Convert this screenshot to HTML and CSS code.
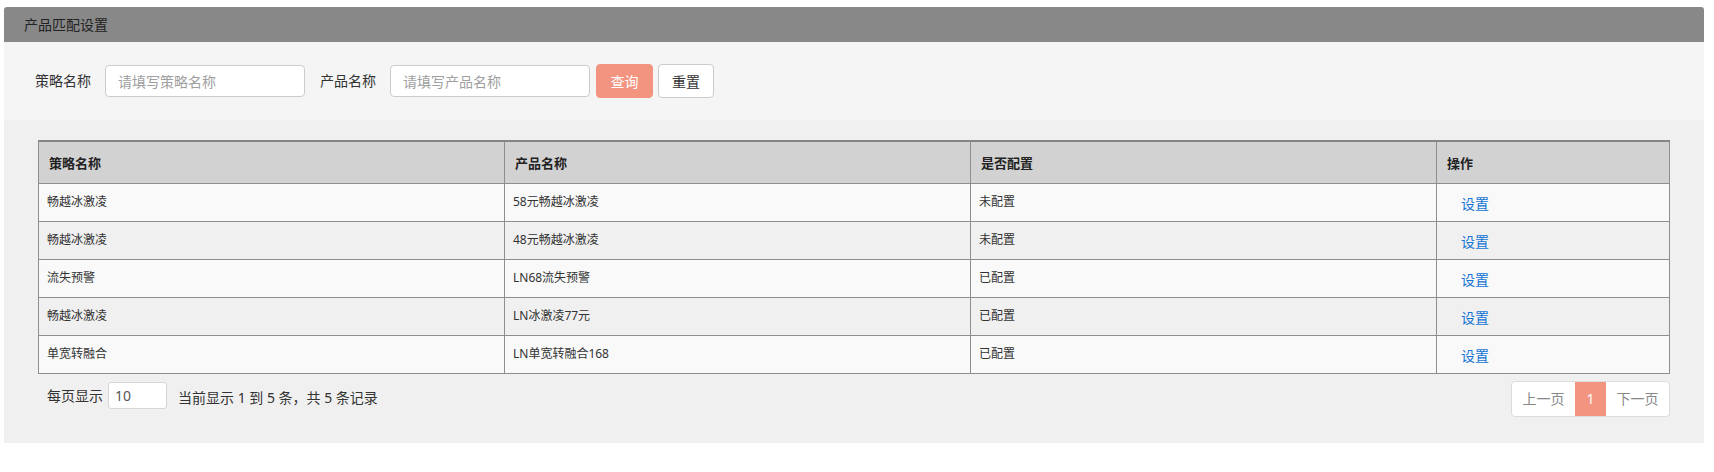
FILE: index.html
```html
<!DOCTYPE html>
<html lang="zh-CN">
<head>
<meta charset="utf-8">
<title>产品匹配设置</title>
<link rel="stylesheet" href="styles.css">
</head>
<body>
<div class="page">
  <div class="panel">
    <div class="panel-head">产品匹配设置</div>
    <div class="search">
      <label class="search-label">策略名称</label>
      <input class="search-input" type="text" placeholder="请填写策略名称">
      <label class="search-label">产品名称</label>
      <input class="search-input" type="text" placeholder="请填写产品名称">
      <button class="btn btn-primary" type="button">查询</button>
      <button class="btn btn-default" type="button">重置</button>
    </div>
    <div class="main">
      <table class="grid">
        <colgroup>
          <col class="col-wide"><col class="col-wide"><col class="col-wide"><col class="col-narrow">
        </colgroup>
        <thead>
          <tr><th>策略名称</th><th>产品名称</th><th>是否配置</th><th>操作</th></tr>
        </thead>
        <tbody>
          <tr><td>畅越冰激凌</td><td>58元畅越冰激凌</td><td>未配置</td><td><a class="op-link" href="#">设置</a></td></tr>
          <tr><td>畅越冰激凌</td><td>48元畅越冰激凌</td><td>未配置</td><td><a class="op-link" href="#">设置</a></td></tr>
          <tr><td>流失预警</td><td>LN68流失预警</td><td>已配置</td><td><a class="op-link" href="#">设置</a></td></tr>
          <tr><td>畅越冰激凌</td><td>LN冰激凌77元</td><td>已配置</td><td><a class="op-link" href="#">设置</a></td></tr>
          <tr><td>单宽转融合</td><td>LN单宽转融合168</td><td>已配置</td><td><a class="op-link" href="#">设置</a></td></tr>
        </tbody>
      </table>
      <div class="footer">
        <div class="page-size">
          <span class="ps-label">每页显示</span>
          <input class="ps-input" type="text" value="10">
          <span class="ps-info">当前显示 1 到 5 条，共 5 条记录</span>
        </div>
        <ul class="pager">
          <li class="pager-item">上一页</li>
          <li class="pager-item active">1</li>
          <li class="pager-item">下一页</li>
        </ul>
      </div>
    </div>
  </div>
</div>
</body>
</html>
```
FILE: styles.css
```css
* { box-sizing: border-box; }

body {
  margin: 0;
  background: #fff;
  font-family: "Segoe UI", "Noto Sans", "Noto Sans CJK SC", sans-serif;
  color: #333;
}

.page {
  padding: 7px 0 0 4px;
}

.panel {
  width: 1700px;
}

.panel-head {
  height: 35px;
  line-height: 35px;
  padding-left: 20px;
  background: #888888;
  color: #222;
  font-size: 14px;
  border-radius: 3px 3px 0 0;
}

.search {
  height: 78px;
  background: #f5f5f5;
  display: flex;
  align-items: center;
  padding-left: 31px;
}

.search-label {
  font-size: 14px;
  color: #333;
  margin-right: 14px;
  line-height: 20px;
}

.search-input {
  width: 200px;
  height: 32px;
  border: 1px solid #cccccc;
  border-radius: 4px;
  background: #fff;
  padding: 0 12px;
  font-family: inherit;
  font-size: 14px;
  margin-right: 15px;
  outline: none;
}

.search-input::placeholder {
  color: #a0a0a0;
}

.search-input + .btn {
  margin-left: -9px;
}

.btn {
  height: 34px;
  font-family: inherit;
  font-size: 14px;
  border-radius: 4px;
  padding: 0;
  cursor: pointer;
}

.btn-primary {
  width: 57px;
  background: #f29480;
  border: 1px solid #f29480;
  color: #fff;
}

.btn-default {
  width: 56px;
  margin-left: 5px;
  background: #fff;
  border: 1px solid #cccccc;
  color: #333;
}

.main {
  background: #f0f0f0;
  padding: 20px 0 26px;
}

.grid {
  width: 96%;
  margin: 0 auto;
  border-collapse: collapse;
  table-layout: fixed;
  border: 1px solid #8e8e8e;
  border-top: 2px solid #858585;
}

.col-wide { width: 28.57%; }
.col-narrow { width: 14.29%; }

.grid th {
  height: 42px;
  background: #d2d2d2;
  border: 1px solid #8e8e8e;
  border-top: 2px solid #858585;
  text-align: left;
  padding: 0 10px;
  font-size: 13px;
  font-weight: bold;
  color: #222;
}

.grid td {
  height: 38px;
  border: 1px solid #8e8e8e;
  padding: 0 8px 2px;
  font-size: 12px;
  color: #333;
  vertical-align: middle;
}

.grid tbody tr:nth-child(odd) td { background: #f9f9f9; }
.grid tbody tr:nth-child(even) td { background: #f0f0f0; }

.op-link {
  display: inline-block;
  margin-left: 16px;
  margin-top: 3px;
  font-size: 14px;
  color: #1574d4;
  text-decoration: none;
}

.footer {
  width: 96%;
  margin: 7px auto 0;
  display: flex;
  justify-content: space-between;
  align-items: flex-start;
}

.page-size {
  display: flex;
  align-items: center;
  height: 27px;
  margin-top: 1px;
  padding-left: 9px;
  font-size: 14px;
  color: #333;
}

.ps-input {
  width: 59px;
  height: 27px;
  margin: 0 11px 0 5px;
  border: 1px solid #d6d6d6;
  border-radius: 3px;
  background: #fff;
  padding: 0 6px;
  font-family: inherit;
  font-size: 14px;
  color: #555;
  outline: none;
}

.ps-info {
  margin-top: 3px;
}

.pager {
  list-style: none;
  margin: 0;
  padding: 0;
  display: flex;
  height: 36px;
  border: 1px solid #dcdcdc;
  border-radius: 4px;
  background: #fff;
  overflow: hidden;
}

.pager-item {
  height: 34px;
  line-height: 34px;
  padding: 0 10px;
  font-size: 14px;
  color: #888;
  width: 63px;
  text-align: center;
}

.pager-item.active {
  width: 31px;
  padding: 0;
  background: #f29480;
  color: #fff;
}
```
